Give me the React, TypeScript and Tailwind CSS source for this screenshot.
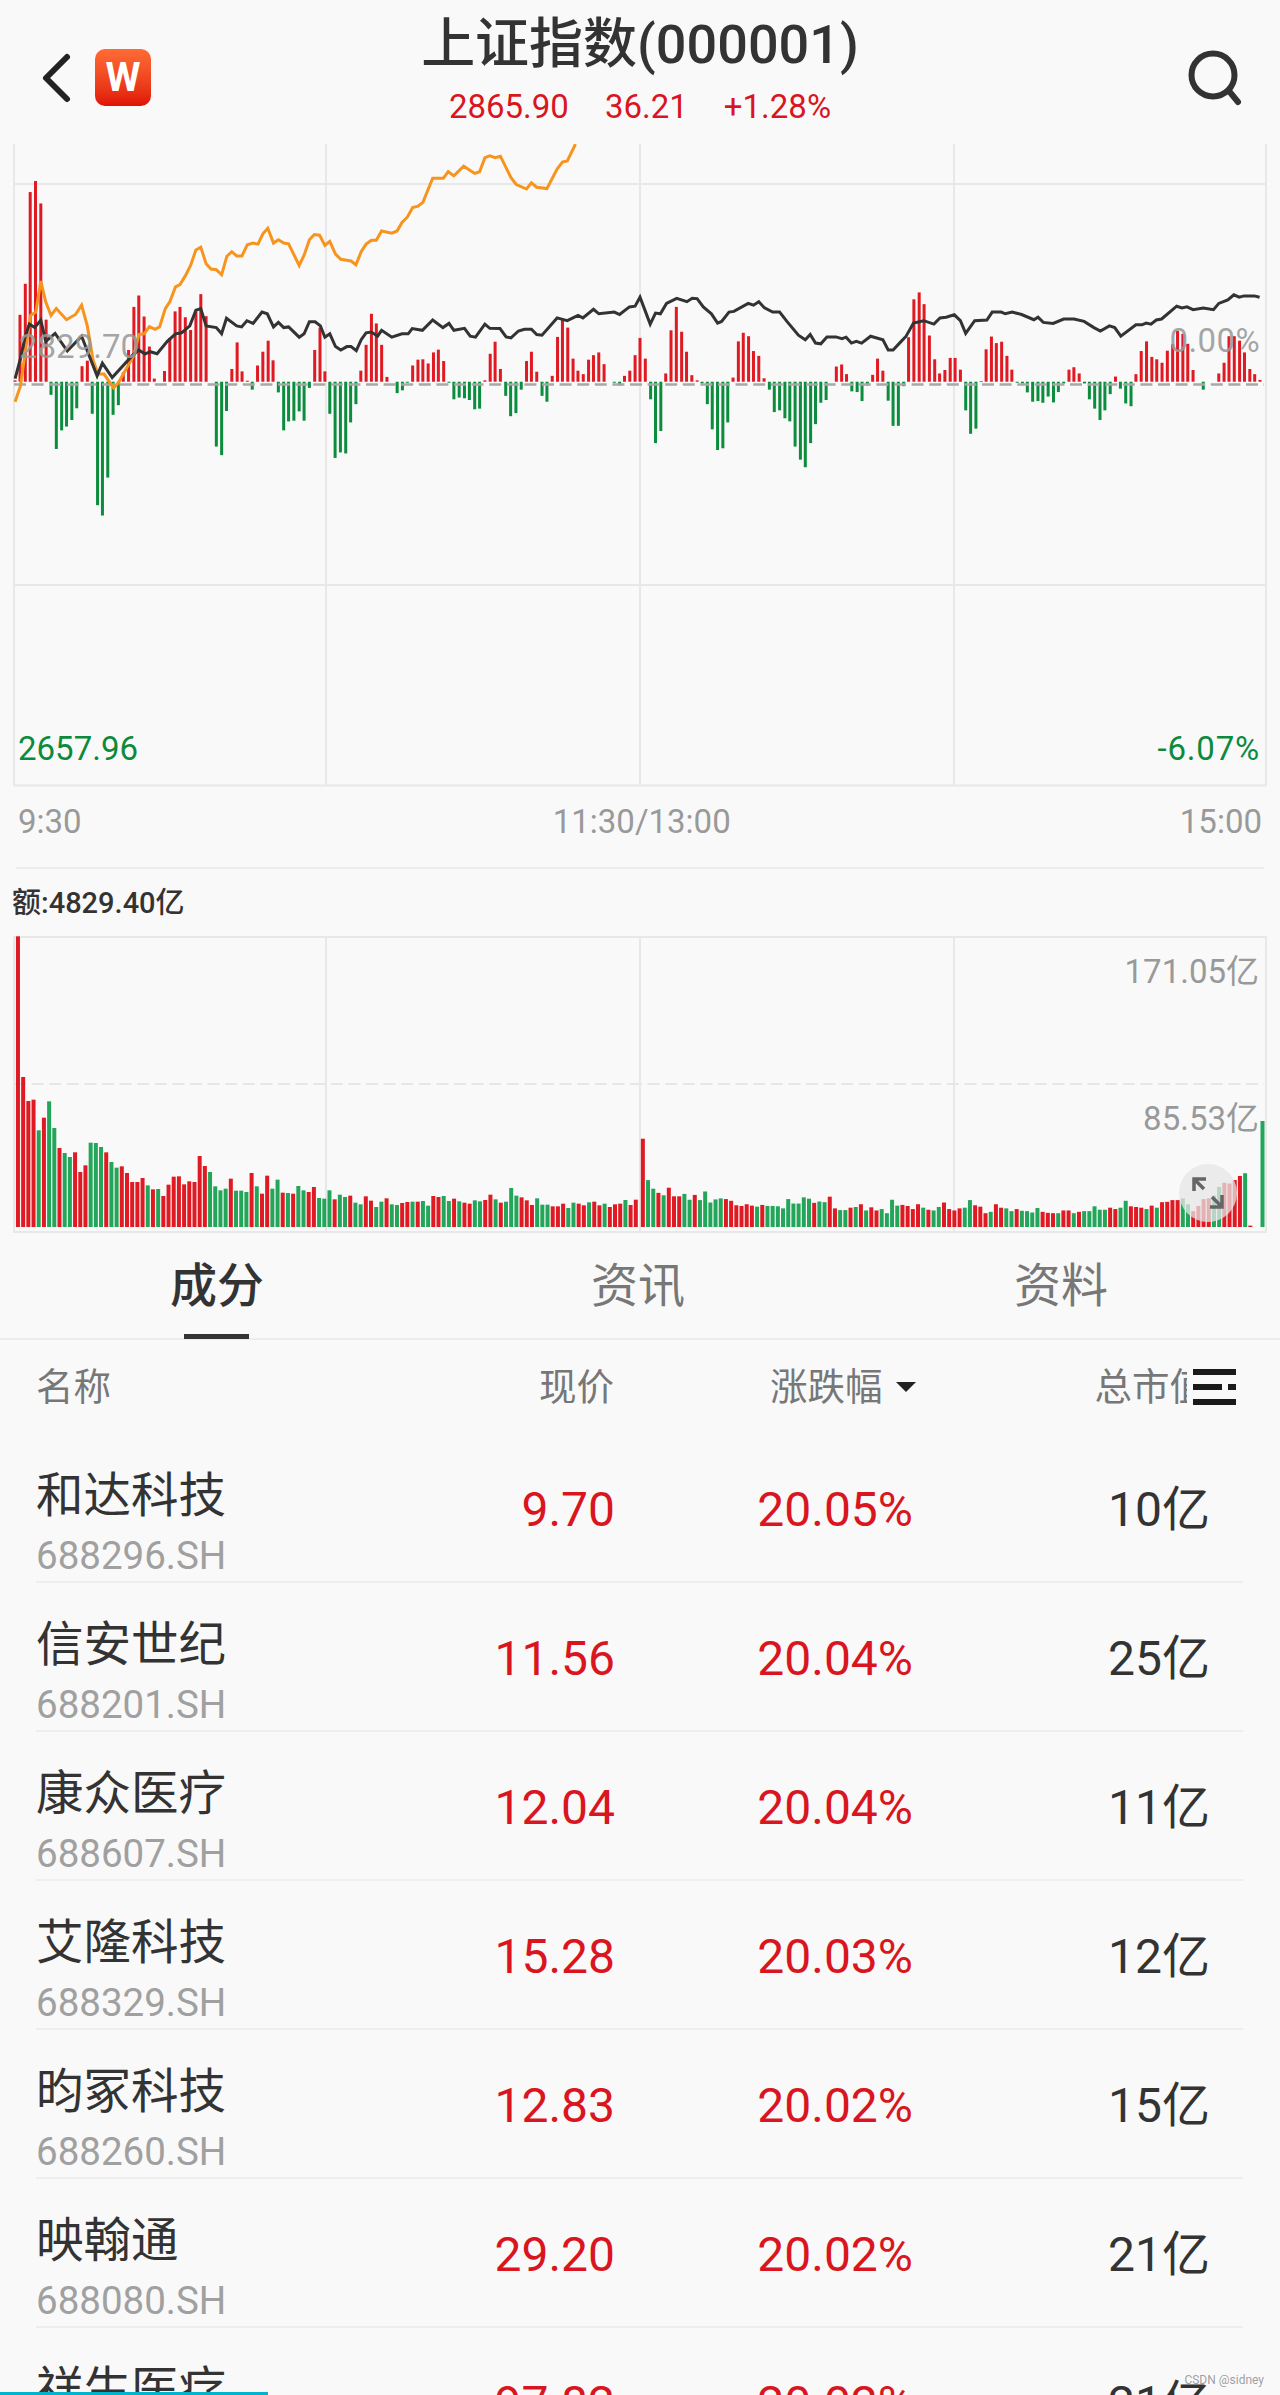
const RED = '#e01a22';
const GREEN = '#0c8d3e';
const VOL_GREEN = '#24a65a';

const barsLeft = [37,1103,49,913,62,823,74,557,87,525,100,590,113,927,125,1145,138,1302,151,1248,163,1237,176,1218,188,1184,201,1062,214,1046,226,1200,239,1465,251,1495,264,1385,277,1203,290,1175,302,1080,315,1015,328,890,340,857,353,918,366,1005,378,1098,403,1076,416,980,429,903,441,890,454,920,467,957,480,905,492,853,505,917,530,1295,543,1320,555,1192,568,1070,581,993,593,1077,606,1104,618,1130,631,1060,644,1020,657,988,669,1045,682,1138,695,1248,707,1222,720,1220,733,1193,745,1220,758,1125,771,1015,784,950,796,1077,808,1200,821,1328,834,1312,847,1315,859,1225,872,1172,884,1075,897,1000,910,910,922,938,935,1000,948,1093,973,1140,986,1132,998,1110,1011,1060,1024,1043,1036,1042,1049,1054,1062,1022,1074,1014,1087,1047,1100,1110,1112,1158,1125,1153,1138,1155,1150,1160,1163,1187,1175,1185,1188,1103,1201,1026,1213,991,1226,1070,1239,1148,1251,1207,1264,1198,1277,1130,1290,1047,1302,1020,1315,1078,1328,1148,1340,1165,1353,1090,1366,977,1378,925,1391,950,1404,1040,1416,1075,1429,1085,1442,1043,1454,1030,1467,1022,1480,1056,1505,1110,1518,1118,1530,1090,1543,1075,1556,1030,1568,980];
const barsRight = [13,1040,26,1158,38,1285,51,1250,63,1083,76,958,89,890,102,962,114,1020,127,1088,140,1103,152,1112,165,1172,177,1245,190,1305,203,1300,215,1225,228,1095,241,990,253,965,266,975,278,1018,291,1032,304,1097,317,1130,329,1195,342,1190,355,1213,367,1222,380,1295,393,1333,405,1355,418,1285,430,1230,443,1168,456,1160,481,1063,494,1057,506,1085,519,1135,532,1137,544,1163,557,1118,570,1087,582,1040,595,1075,608,1162,620,1235,633,1235,646,1120,658,978,671,868,684,848,696,882,709,973,722,1042,734,1083,747,1073,760,1038,772,1038,785,1072,798,1190,810,1258,823,1243,836,1105,848,1013,861,976,873,995,886,991,899,1032,911,1072,924,1110,937,1112,949,1138,962,1165,975,1163,987,1168,1000,1150,1013,1167,1025,1137,1038,1112,1051,1072,1063,1065,1076,1083,1089,1112,1101,1158,1114,1185,1127,1218,1139,1190,1152,1143,1165,1092,1177,1127,1190,1170,1203,1178,1215,1085,1228,1018,1241,990,1254,1035,1266,1042,1279,1052,1292,1017,1305,998,1317,960,1330,968,1342,997,1355,1073,1380,1130,1418,1083,1431,1052,1443,975,1456,975,1469,988,1481,1022,1494,1070,1506,1085,1519,1102];

const blackLeft = [37,1098,50,1040,62,975,72,940,85,950,100,928,112,990,135,967,165,1018,200,975,218,1030,238,1090,251,1053,275,1095,325,1030,340,1015,355,1027,368,1020,385,1026,410,990,430,968,445,965,465,945,480,900,492,895,505,945,530,950,543,968,555,923,580,945,592,948,605,930,620,938,642,905,655,910,670,948,682,935,695,950,707,948,733,978,745,968,758,933,772,933,785,945,796,978,808,968,822,1005,835,1015,850,1005,860,1005,873,1017,885,985,897,965,910,963,925,975,935,958,960,978,985,968,1000,968,1010,953,1035,958,1060,928,1085,950,1100,938,1112,958,1138,952,1152,975,1165,978,1188,940,1200,952,1225,953,1240,977,1252,980,1270,960,1285,955,1302,955,1315,970,1328,972,1365,922,1390,930,1416,915,1428,922,1454,897,1467,910,1505,905,1518,912,1542,890,1556,888,1568,862];
const blackRight = [0,862,25,940,38,908,50,910,65,880,90,865,115,875,128,865,140,866,155,890,175,910,190,937,200,932,218,905,230,903,265,880,278,885,291,875,305,893,325,905,342,905,360,932,388,972,405,985,417,970,430,995,443,997,458,977,480,977,495,982,505,978,518,995,530,990,543,995,565,975,595,985,608,1015,620,1015,640,990,652,975,670,937,695,930,720,940,735,922,750,920,770,913,785,930,798,967,820,930,850,928,863,905,885,905,895,910,912,905,935,912,965,927,975,920,988,935,1012,938,1038,925,1063,925,1088,932,1112,950,1128,960,1150,945,1163,950,1178,975,1215,942,1230,942,1240,937,1252,940,1265,928,1278,925,1315,888,1328,893,1340,890,1355,898,1380,893,1405,898,1418,880,1440,870,1455,855,1468,862,1480,858,1505,858,1518,862];
const orange = [37,1165,50,1120,62,1020,75,915,88,905,100,815,112,875,125,915,138,895,163,927,185,912,200,885,214,945,228,1045,240,1085,255,1085,278,1125,290,1110,328,1030,340,970,353,968,366,947,380,955,391,948,405,895,416,875,430,832,441,825,454,800,467,770,480,725,492,717,505,765,517,780,530,782,543,797,556,743,568,730,580,742,593,742,606,710,620,705,632,708,644,678,656,662,670,705,682,695,695,705,707,707,733,770,745,740,758,695,770,680,783,682,796,712,808,700,822,737,835,752,860,757,872,768,885,730,897,708,910,697,922,697,935,670,960,676,973,670,985,645,998,630,1011,602,1024,598,1036,587,1060,517,1086,517,1098,498,1112,510,1136,482,1163,503,1175,498,1188,457,1200,452,1213,457,1226,453,1252,515,1265,535,1290,548,1302,530,1315,543,1340,547,1365,490,1378,470,1390,467,1410,418];

// volume tops, negative = green bar
const volLeft = [228,650,722,718,-810,772,-723,-803,863,-878,-890,876,935,915,-847,-848,-860,876,-905,-922,918,938,965,965,953,-975,987,-986,1007,973,949,948,972,963,965,887,917,-935,-978,-990,-985,955,-991,-991,-995,938,-978,1000,946,-985,-958,997,-998,1000,-977,-990,995,980,-1013,-1015,-990,1017,-1003,-1010,1006,-1027,-1032,1008,1021,-1040,-1024,1014,-1032,-1034,1028,1025,-1024,1024,-1022,-1036,1007,1010,-1007,-1022,1015,-1023,1027,1030,-1020,-1023,1019,1003,-1017,1027,-1024,-983,-1006,1011,1020,1034,-1014,-1033,-1033,1038,1038,1030,-1043,-1027,1030,1035,-1026,1024,1035,-1030,1040,1032,1030,-1019,1034,1018];
const volRight = [810,-930,-955,967,-974,952,977,977,-970,-987,973,-988,-963,-995,-986,-983,985,990,1003,1005,1000,1004,-1007,1002,-1005,-1005,-1006,-1012,-985,-998,-998,-980,-984,996,-992,-994,978,1012,-1017,-1017,1010,-1008,1000,-1018,1009,1018,-1014,-1026,-987,-1004,1002,1005,1014,1000,-1010,1016,-1018,-1008,995,1014,1018,1012,-1010,-988,1003,1007,1026,-1022,1000,1010,-1012,-1020,1014,-1019,-1020,-1024,-1011,1022,1025,1026,-1026,1018,1018,-1026,1022,-1020,-1020,-1006,-1016,-1016,1010,1014,-1010,-990,1006,1008,1010,-1014,1004,-1010,994,993,988,988,-983,-1000,1020,1005,985,983,-975,-950,938,940,930,918,-910,1062];

const pts = (a: number[], off: number) => {
  let s = '';
  for (let i = 0; i < a.length; i += 2) s += `${(a[i] / 2.45 + off).toFixed(1)},${(a[i + 1] / 2.9 - 144).toFixed(1)} `;
  return s;
};

function PriceBars({ data, off }: { data: number[]; off: number }) {
  const out = [];
  for (let i = 0; i < data.length; i += 2) {
    const x = data[i] / 2.45 + off - 1.5;
    const y = data[i + 1] / 2.9 - 144;
    const base = 1107 / 2.9 - 144;
    out.push(
      <rect key={i} x={x} y={Math.min(y, base)} width={3} height={Math.abs(y - base)} fill={y > base ? GREEN : RED} />
    );
  }
  return <>{out}</>;
}

function PriceChart() {
  return (
    <div className="relative h-[643px]">
      <svg className="absolute inset-0" width="1280" height="643" viewBox="0 0 1280 643">
        <g stroke="#e8e8e8" strokeWidth="2">
          <path d="M14 0V642M326 0V642M640 0V642M954 0V642M1266 0V642M14 40H1266M14 441H1266M14 641.5H1266" fill="none" />
        </g>
        <PriceBars data={barsLeft} off={0} />
        <PriceBars data={barsRight} off={640} />
        <line x1="14" y1="240.5" x2="1264" y2="240.5" stroke="#a8a8a8" strokeWidth="2.5" strokeDasharray="12 5.6" />
        <polyline points={pts(orange, 0)} fill="none" stroke="#f7941d" strokeWidth="3" />
        <polyline points={pts(blackLeft, 0) + pts(blackRight, 640)} fill="none" stroke="#333" strokeWidth="3" />
      </svg>
      <span className="absolute left-[19px] top-[183px] text-[33px] leading-[40px] text-[#999]/90">2829.70</span>
      <span className="absolute right-[20px] top-[177px] text-[33px] leading-[40px] tracking-[0.4px] text-[#999]/90">0.00%</span>
      <span className="absolute left-[18px] top-[585px] text-[33px] leading-[40px] text-[#0c8a3c]">2657.96</span>
      <span className="absolute right-[20px] top-[585px] text-[33px] leading-[40px] tracking-[0.8px] text-[#0c8a3c]">-6.07%</span>
    </div>
  );
}

function VolumeBars() {
  const out = [];
  const draw = (a: number[], start: number, bottom: number, sy: number, off: number, key: string) => {
    a.forEach((v, i) => {
      const top = Math.abs(v);
      const h = (bottom - top) / sy;
      out.push(
        <rect key={key + i} x={(start + 12.72 * i) / 2.45 + off - 2} y={291 - h} width={4} height={h} fill={v < 0 ? VOL_GREEN : RED} />
      );
    });
  };
  draw(volLeft, 44, 1100, 3, 0, 'l');
  draw(volRight, 7, 1066, 2.9, 640, 'r');
  out.push(<rect key="last" x={1260.5} y={291 - 106} width={4} height={106} fill={VOL_GREEN} />);
  return <>{out}</>;
}

function VolumeChart() {
  return (
    <div className="relative h-[297px]">
      <svg className="absolute inset-0" width="1280" height="297" viewBox="0 0 1280 297">
        <path d="M14 0V297M326 0V297M640 0V297M954 0V297M1266 0V297M14 1H1266M14 296H1266" stroke="#e8e8e8" strokeWidth="2" fill="none" />
        <line x1="14" y1="148" x2="1264" y2="148" stroke="#e6e6e6" strokeWidth="2" strokeDasharray="12 5.6" />
        <VolumeBars />
      </svg>
      <span className="absolute right-[21px] top-[16px] text-[33px] leading-[40px] text-[#999]">171.05亿</span>
      <span className="absolute right-[21px] top-[163px] text-[33px] leading-[40px] text-[#999]">85.53亿</span>
      <div className="absolute left-[1179px] top-[228px] w-[58px] h-[58px] rounded-full bg-[#e6e6e6]/75 flex items-center justify-center">
        <svg width="34" height="34" viewBox="0 0 34 34" fill="none" stroke="#666" strokeWidth="3.5">
          <path d="M3 15V3H15M3 3L13 13M31 19V31H19M31 31L21 21" />
        </svg>
      </div>
    </div>
  );
}

const rows = [
  ['和达科技', '688296.SH', '9.70', '20.05%', '10亿'],
  ['信安世纪', '688201.SH', '11.56', '20.04%', '25亿'],
  ['康众医疗', '688607.SH', '12.04', '20.04%', '11亿'],
  ['艾隆科技', '688329.SH', '15.28', '20.03%', '12亿'],
  ['昀冢科技', '688260.SH', '12.83', '20.02%', '15亿'],
  ['映翰通', '688080.SH', '29.20', '20.02%', '21亿'],
  ['祥生医疗', '688358.SH', '97.82', '20.02%', '21亿'],
];

export default function App() {
  return (
    <div className="relative h-[2395px] w-[1280px] overflow-hidden bg-[#f9f9f9] [font-family:Roboto,'Noto_Sans_CJK_SC',sans-serif]">
      {/* header */}
      <header className="h-[144px] grid grid-cols-[1fr_auto_1fr] items-start">
        <div className="flex items-center pl-[40px] pt-[49px]">
          <svg width="32" height="52" viewBox="0 0 32 52" fill="none" stroke="#222" strokeWidth="6" strokeLinecap="round" strokeLinejoin="round">
            <path d="M27 5L6 26L27 47" />
          </svg>
          <div className="ml-[23px] w-[56px] h-[57px] rounded-[10px] bg-gradient-to-b from-[#ff6b35] to-[#e00f05] flex items-center justify-center text-white text-[40px] font-bold leading-none">
            W
          </div>
        </div>
        <div className="flex flex-col items-center pt-[14px]">
          <div className="text-[54px] leading-[62px] font-medium text-[#333]">上证指数(000001)</div>
          <div className="mt-[11px] flex gap-[36px] text-[33px] leading-[40px] text-[#d9161f]">
            <span>2865.90</span>
            <span>36.21</span>
            <span>+1.28%</span>
          </div>
        </div>
        <div className="flex justify-end pr-[37px] pt-[50px]">
          <svg width="56" height="56" viewBox="0 0 56 56" fill="none" stroke="#333" strokeWidth="6" strokeLinecap="round">
            <circle cx="26" cy="25" r="21.5" />
            <path d="M42 41L51 52" />
          </svg>
        </div>
      </header>

      <PriceChart />

      {/* time axis */}
      <div className="h-[80px] mx-[18px] flex items-start justify-between pt-[15px] text-[33px] leading-[40px] text-[#999]">
        <span>9:30</span>
        <span className="ml-[22px]">11:30/13:00</span>
        <span>15:00</span>
      </div>
      <div className="mx-[16px] h-[2px] w-[1248px] bg-[#ececec]" />

      <div className="h-[67px] pl-[12px] pt-[14px] text-[29px] leading-[40px] font-medium text-[#333]">额:4829.40亿</div>

      <VolumeChart />

      {/* tabs */}
      <div className="relative h-[107px] flex border-b-2 border-[#ececec] text-[47px] leading-[60px] text-[#777]">
        <div className="w-[434px] pt-[23px] text-center font-medium text-[#333]">成分</div>
        <div className="w-[408px] pt-[23px] text-center">资讯</div>
        <div className="w-[438px] pt-[23px] text-center">资料</div>
        <div className="absolute left-[184px] bottom-[-1px] w-[65px] h-[5px] bg-[#333]" />
      </div>

      {/* table head */}
      <div className="relative h-[94px] px-[36px] flex items-center text-[37.5px] leading-[44px] text-[#777]">
        <span className="w-[370px]">名称</span>
        <span className="w-[208px] text-right">现价</span>
        <span className="ml-[156px] flex items-center">
          涨跌幅
          <span className="ml-[13px] w-0 h-0 border-x-[10px] border-x-transparent border-t-[10px] border-t-[#222]" />
        </span>
        <span className="ml-[179px]">总市值</span>
        <div className="absolute right-0 top-0 h-full w-[93px] bg-[#f9f9f9] flex flex-col justify-center gap-[9px] pl-[6px]">
          <div className="w-[43px] h-[6px] bg-[#1a1a1a]" />
          <div className="flex w-[43px] justify-between">
            <div className="w-[29px] h-[6px] bg-[#1a1a1a]" />
            <div className="w-[8px] h-[6px] bg-[#1a1a1a]" />
          </div>
          <div className="w-[43px] h-[6px] bg-[#1a1a1a]" />
        </div>
      </div>

      {/* rows */}
      <div className="ml-[36px] mr-[37px]">
        {rows.map((r) => (
          <div key={r[0]} className="h-[149px] flex items-center border-b-2 border-[#eeeeee] pt-[4px]">
            <div className="w-[370px] self-start mt-[28px]">
              <div className="text-[47.5px] leading-[60px] text-[#333]">{r[0]}</div>
              <div className="mt-[8px] text-[38.5px] leading-[44px] text-[#a0a0a0]">{r[1]}</div>
            </div>
            <div className="w-[209px] text-right text-[48px] leading-[60px] text-[#d9161f]">{r[2]}</div>
            <div className="w-[298px] text-right text-[48px] leading-[60px] text-[#d9161f]">{r[3]}</div>
            <div className="w-[297px] text-right text-[48px] leading-[60px] text-[#333]">{r[4]}</div>
          </div>
        ))}
      </div>

      {/* overlays at the bottom edge */}
      <div className="absolute left-0 bottom-0 w-[268px] h-[3px] bg-[#00b4cc]" />
      <span className="absolute right-[16px] bottom-[8px] text-[12px] leading-[14px] text-[#888]/80">CSDN @sidney</span>
    </div>
  );
}
